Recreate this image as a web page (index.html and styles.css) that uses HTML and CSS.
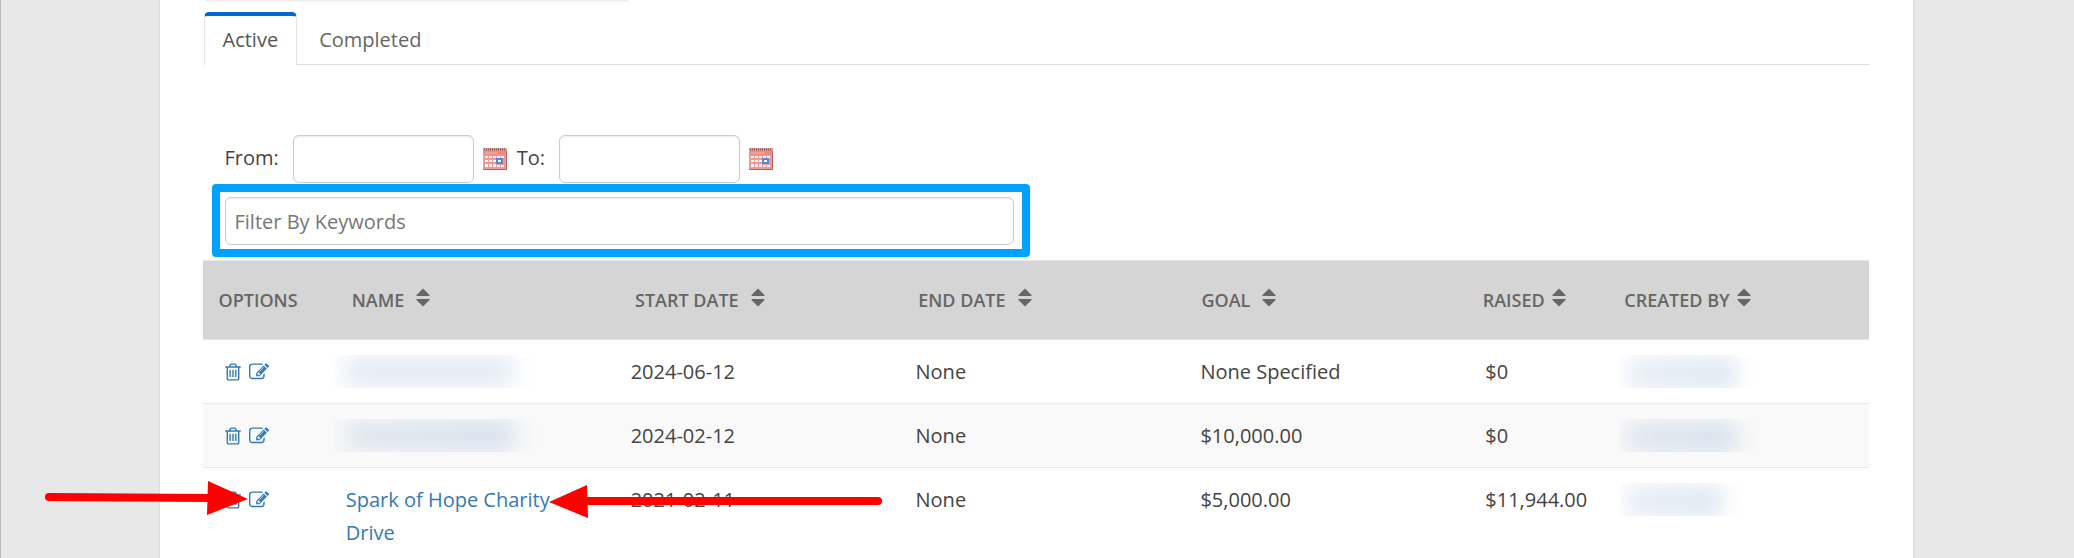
FILE: index.html
```html
<!DOCTYPE html>
<html lang="en">
<head>
  <meta charset="UTF-8">
  <meta name="viewport" content="width=device-width, initial-scale=1.0">
  <title>Fundraising Campaigns</title>
  <link rel="stylesheet" href="styles.css">
</head>
<body>
  <!-- shared icons -->
  <svg class="sprite" aria-hidden="true">
    <symbol id="trash" viewBox="0 0 1792 1792">
      <path d="M704 736v576q0 14-9 23t-23 9h-64q-14 0-23-9t-9-23v-576q0-14 9-23t23-9h64q14 0 23 9t9 23zm256 0v576q0 14-9 23t-23 9h-64q-14 0-23-9t-9-23v-576q0-14 9-23t23-9h64q14 0 23 9t9 23zm256 0v576q0 14-9 23t-23 9h-64q-14 0-23-9t-9-23v-576q0-14 9-23t23-9h64q14 0 23 9t9 23zm128 724v-948h-896v948q0 22 7 40.500t14.500 27 10.500 8.500h832q3 0 10.500-8.500t14.500-27 7-40.500zm-672-1076h448l-48-117q-7-9-17-11h-317q-10 2-17 11zm928 32v64q0 14-9 23t-23 9h-96v948q0 83-47 143.500t-113 60.500h-832q-66 0-113-58.500t-47-141.500v-952h-96q-14 0-23-9t-9-23v-64q0-14 9-23t23-9h309l70-167q15-37 54-63t79-26h320q40 0 79 26t54 63l70 167h309q14 0 23 9t9 23z"/>
    </symbol>
    <symbol id="edit" viewBox="0 0 1792 1792">
      <path d="M888 1184l116-116-152-152-116 116v56h96v96h56zm440-720q-16-16-33 1l-350 350q-17 17-1 33t33-1l350-350q17-17 1-33zm80 594v190q0 119-84.500 203.500t-203.500 84.500h-832q-119 0-203.500-84.500t-84.500-203.500v-832q0-119 84.500-203.500t203.500-84.500h832q63 0 117 25 15 7 18 23 3 17-9 29l-49 49q-14 14-32 8-23-6-45-6h-832q-66 0-113 47t-47 113v832q0 66 47 113t113 47h832q66 0 113-47t47-113v-126q0-13 9-22l64-64q15-15 35-7t20 29zm-96-738l288 288-672 672h-288v-288zm444 132l-92 92-288-288 92-92q28-28 68-28t68 28l152 152q28 28 28 68t-28 68z"/>
    </symbol>
    <symbol id="sort" viewBox="0 0 14 19">
      <path d="M7 0.500L13.500 7Q14 8 13 8H1Q0 8 0.500 7ZM7 18.500L13.500 12Q14 11 13 11H1Q0 11 0.500 12Z"/>
    </symbol>
    <symbol id="calendar" viewBox="0 0 24 22">
      <rect width="24" height="22" fill="#ee9a96"/>
      <rect width="24" height="3" fill="#d9a09c"/>
      <path d="M1 1.500H23" stroke="#8c5552" stroke-width="2" stroke-dasharray="1 1"/>
      <rect x="1" y="3" width="22" height="4" fill="#f4877f"/>
      <path d="M2 5H15" stroke="#f9b5af"/>
      <g fill="#fff" opacity="0.900">
        <path d="M2 8h3v2H2zM6 8h3v2H6zM10 8h3v2h-3zM14 8h3v2h-3zM18 8h3v2h-3z"/>
        <path d="M2 12h3v2H2zM6 12h3v2H6zM10 12h3v2h-3z"/>
        <path d="M2 16h3v3H2zM6 16h3v3H6zM10 16h3v3h-3zM14 17h3v2h-3zM18 17h3v2h-3z"/>
      </g>
      <rect x="14" y="11" width="5" height="4" fill="#fff" stroke="#5585e0" stroke-width="2"/>
      <path d="M0 21.500H24M23.500 3V22" stroke="#b9635f"/>
    </symbol>
  </svg>

  <div class="page">
    <div class="summary-card"></div>

    <nav class="tabs">
      <a class="tab active" href="#active">Active</a>
      <a class="tab" href="#completed">Completed</a>
    </nav>

    <form class="filters">
      <div class="dates">
        <label for="from">From:</label>
        <input class="field date" type="text" id="from">
        <button class="cal" type="button" aria-label="Pick start date"><svg><use href="#calendar"/></svg></button>
        <label for="to">To:</label>
        <input class="field date" type="text" id="to">
        <button class="cal" type="button" aria-label="Pick end date"><svg><use href="#calendar"/></svg></button>
      </div>
      <div class="keywords">
        <input class="field" type="text" placeholder="Filter By Keywords" aria-label="Filter By Keywords">
      </div>
    </form>

    <table class="campaigns">
      <thead>
        <tr>
          <th class="options">Options</th>
          <th><button class="sort" type="button">Name <svg><use href="#sort"/></svg></button></th>
          <th><button class="sort" type="button">Start Date <svg><use href="#sort"/></svg></button></th>
          <th><button class="sort" type="button">End Date <svg><use href="#sort"/></svg></button></th>
          <th><button class="sort" type="button">Goal <svg><use href="#sort"/></svg></button></th>
          <th class="raised"><button class="sort tight" type="button">Raised <svg><use href="#sort"/></svg></button></th>
          <th class="creator"><button class="sort tight" type="button">Created By <svg><use href="#sort"/></svg></button></th>
        </tr>
      </thead>
      <tbody>
        <tr>
          <td class="options">
            <div class="actions">
              <a href="#delete" aria-label="Delete"><svg><use href="#trash"/></svg></a>
              <a href="#edit" aria-label="Edit"><svg><use href="#edit"/></svg></a>
            </div>
          </td>
          <td><div class="hidden-text name"></div></td>
          <td>2024-06-12</td>
          <td>None</td>
          <td>None Specified</td>
          <td class="raised">$0</td>
          <td class="creator"><div class="hidden-text"></div></td>
        </tr>
        <tr>
          <td class="options">
            <div class="actions">
              <a href="#delete" aria-label="Delete"><svg><use href="#trash"/></svg></a>
              <a href="#edit" aria-label="Edit"><svg><use href="#edit"/></svg></a>
            </div>
          </td>
          <td><div class="hidden-text name"></div></td>
          <td>2024-02-12</td>
          <td>None</td>
          <td>$10,000.00</td>
          <td class="raised">$0</td>
          <td class="creator"><div class="hidden-text"></div></td>
        </tr>
        <tr>
          <td class="options">
            <div class="actions">
              <a href="#delete" aria-label="Delete"><svg><use href="#trash"/></svg></a>
              <a href="#edit" aria-label="Edit"><svg><use href="#edit"/></svg></a>
            </div>
          </td>
          <td><a href="#campaign">Spark of Hope Charity Drive</a></td>
          <td>2021-02-11</td>
          <td>None</td>
          <td>$5,000.00</td>
          <td class="raised">$11,944.00</td>
          <td class="creator"><div class="hidden-text short"></div></td>
        </tr>
      </tbody>
    </table>
  </div>

  <!-- arrows pointing at the edit icon and the campaign name -->
  <svg class="arrow arrow-edit" viewBox="0 0 204 36" aria-hidden="true">
    <path d="M5 17L166 18" stroke="#f00" stroke-width="8" stroke-linecap="round"/>
    <path d="M164 1L204 19L163 35Z" fill="#f00"/>
  </svg>
  <svg class="arrow arrow-name" viewBox="0 0 334 36" aria-hidden="true">
    <path d="M36 17H329" stroke="#f00" stroke-width="8" stroke-linecap="round"/>
    <path d="M0 18L38 1L39 34Z" fill="#f00"/>
  </svg>
</body>
</html>
```
FILE: styles.css
```css
* {
  box-sizing: border-box;
}
body {
  margin: 0;
  position: relative;
  min-height: 100vh;
  overflow: hidden;
  background-color: #e8e8e8;
  border-left: 1px solid #bbb;
  font-family: "Open Sans", sans-serif;
  font-size: 20px;
  line-height: 33px;
  color: #444;
}
a {
  color: #337ab7;
  text-decoration: none;
}
button {
  padding: 0;
  border: none;
  background: none;
  font: inherit;
  color: inherit;
  cursor: pointer;
}
svg {
  display: block;
}
.sprite {
  position: absolute;
  width: 0;
  height: 0;
}
.page {
  width: 1755px;
  max-width: 100%;
  min-height: 100vh;
  margin-left: max(0px, calc(50% - 879px));
  padding: 0 44px 0 43px;
  background: #fff;
  border: 1px solid #dcdcdc;
  border-width: 0 1px;
}
.summary-card {
  width: 424px;
  height: 1px;
  margin-left: 2px;
  background: #eee;
  box-shadow: 0 1px 1px #f5f5f5;
}

/* Tabs */
.tabs {
  display: flex;
  margin: 11px 0 0 1px;
  border-bottom: 1px solid #ddd;
}
.tab {
  padding: 10px 21px 7px;
  border: 1px solid transparent;
  color: #666;
}
.tab.active {
  margin-bottom: -1px;
  padding: 7px 18px 8px;
  border-color: #e5e5e5;
  border-top: 4px solid #0069d0;
  border-bottom: none;
  border-radius: 5px 5px 0 0;
  background: #fff;
  color: #555;
}

/* Filters */
.filters {
  padding: 70px 0 3px 9px;
}
.field {
  width: 100%;
  height: 48px;
  padding: 0 9px;
  border: 1px solid #ccc;
  border-radius: 6px;
  box-shadow: inset 0 1px 2px rgba(0,0,0,0.08);
  background: #fff;
  font: inherit;
  color: #444;
}
.field::placeholder {
  color: #777;
  opacity: 1;
}
.dates {
  display: flex;
  align-items: center;
  padding-left: 13px;
}
.dates label {
  margin-right: 14px;
  padding-bottom: 4px;
}
.date {
  width: 181px;
}
.cal {
  margin: 0 10px 0 9px;
}
.cal svg {
  width: 24px;
  height: 22px;
}
.keywords {
  width: 818px;
  max-width: 100%;
  margin-top: 1px;
  padding: 5px 8px 4px 5px;
  border: 8px solid #00a2ff;
  border-radius: 4px;
}

/* Table, head and body have their own column widths */
.campaigns,
.campaigns thead,
.campaigns tbody {
  display: block;
}
.campaigns tr {
  display: table;
  width: 100%;
  table-layout: fixed;
  border-spacing: 0;
}
th {
  width: 17%;
  height: 80px;
  padding: 0 16px;
  background: #d5d5d5;
  border: 1px solid #e8e8e8;
  border-width: 1px 0;
  font-size: 18px;
  font-weight: 600;
  text-align: left;
  text-transform: uppercase;
  color: #666;
}
th.options {
  width: 8%;
}
th.raised {
  width: 8.5%;
  padding: 0 0 0 14px;
}
th.creator {
  width: 15.5%;
  padding-left: 14px;
}
.sort {
  display: flex;
  align-items: center;
  gap: 12px;
  text-transform: uppercase;
}
.sort.tight {
  gap: 7px;
}
.sort svg {
  width: 14px;
  height: 19px;
  margin-bottom: 5px;
  fill: #666;
}
td {
  width: 17.1%;
  padding: 15px 20px;
  vertical-align: top;
  border-bottom: 1px solid #e8e8e8;
}
td.options {
  width: 7.4%;
  padding-right: 0;
}
td.raised {
  width: 8.5%;
  padding-right: 0;
  white-space: nowrap;
}
td.creator {
  width: 15.7%;
  padding-left: 12px;
}
tbody tr:nth-child(even) td {
  background: #f9f9f9;
}
.actions {
  display: flex;
  align-items: center;
  gap: 6px;
  height: 33px;
}
.actions svg {
  width: 20px;
  height: 20px;
  fill: #337ab7;
}

/* Blurred out names */
.hidden-text {
  width: 136px;
  height: 33px;
  overflow: hidden;
}
.hidden-text::before {
  content: "";
  display: block;
  width: 80%;
  height: 29px;
  margin: 4px 0 0 6%;
  background: linear-gradient(90deg, #e5ecf5, #dae5f1);
  filter: blur(11px);
}
.hidden-text.name {
  width: 210px;
  margin-left: -13px;
}
.hidden-text.name::before {
  margin-top: 2px;
  background: #e2eaf4;
}
.hidden-text.short {
  width: 120px;
}
tbody tr:nth-child(even) .hidden-text::before {
  background: linear-gradient(90deg, #dee5ee, #d3dfeb);
}

/* Arrows */
.arrow {
  position: absolute;
  fill: none;
}
.arrow-edit {
  left: 43px;
  top: 480px;
  width: 204px;
}
.arrow-name {
  left: 548px;
  top: 484px;
  width: 334px;
}
```
